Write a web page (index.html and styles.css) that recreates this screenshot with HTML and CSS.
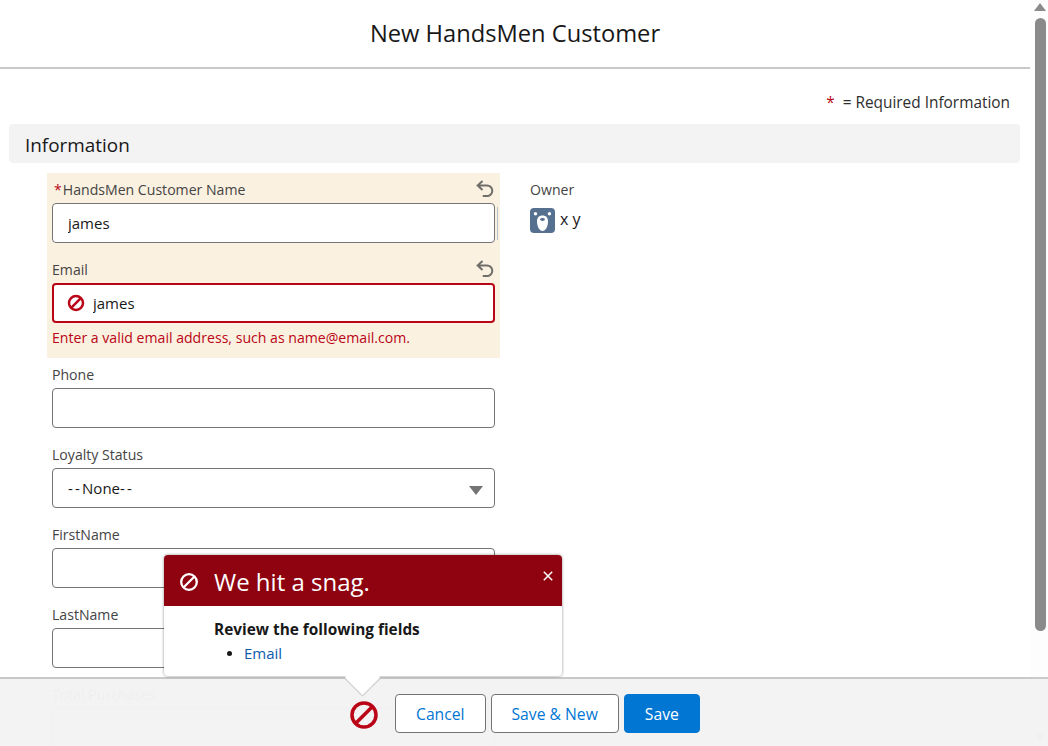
FILE: index.html
```html
<!DOCTYPE html>
<html lang="en">
<head>
<meta charset="utf-8">
<title>New HandsMen Customer</title>
<link rel="stylesheet" href="styles.css">
</head>
<body>
<div class="app">
  <main class="modal">
    <header class="modal-head"><h1>New HandsMen Customer</h1></header>
    <p class="required"><span class="star">*</span> = Required Information</p>
    <h2 class="section">Information</h2>
    <div class="columns">
      <div class="form-col">
        <div class="changed">
          <div class="field">
            <div class="label-row">
              <label><span class="star-label">*</span>HandsMen Customer Name</label>
              <svg class="undo" viewBox="0 0 16 16"><path d="M5.800.8 1.500 4.800l4.300 4M1.800 4.800h8a4.700 4.700 0 0 1 0 9.400H6"/></svg>
            </div>
            <div class="input-wrap with-rule"><input class="input" type="text" value="james"></div>
          </div>
          <div class="field tight">
            <div class="label-row">
              <label>Email</label>
              <svg class="undo" viewBox="0 0 16 16"><path d="M5.800.8 1.500 4.800l4.300 4M1.800 4.800h8a4.700 4.700 0 0 1 0 9.400H6"/></svg>
            </div>
            <div class="input-wrap">
              <input class="input invalid" type="text" value="james">
              <svg class="ban ban-input" viewBox="0 0 18 18"><circle cx="9" cy="9" r="7"/><path d="M13.800 4.200 4.200 13.800"/></svg>
            </div>
            <p class="error">Enter a valid email address, such as name@email.com.</p>
          </div>
        </div>
        <div class="plain">
          <div class="field"><div class="label-row"><label>Phone</label></div><input class="input" type="text"></div>
          <div class="field"><div class="label-row"><label>Loyalty Status</label></div>
            <div class="input-wrap"><div class="input select"><span class="dashes">--</span>None<span class="dashes">--</span></div><span class="caret"></span></div></div>
          <div class="field"><div class="label-row"><label>FirstName</label></div><input class="input" type="text"></div>
          <div class="field"><div class="label-row"><label>LastName</label></div><input class="input" type="text"></div>
          <div class="field"><div class="label-row"><label>Total Purchases</label></div><input class="input" type="text"></div>
        </div>
      </div>
      <div class="owner">
        <div class="owner-label">Owner</div>
        <div class="owner-value">
          <svg class="avatar" viewBox="0 0 25 25">
            <rect width="25" height="25" rx="4" fill="#56708f"/>
            <circle cx="5.500" cy="5.800" r="1.700" fill="#fff"/>
            <circle cx="19.500" cy="5.800" r="1.700" fill="#fff"/>
            <path d="M12.500 7.500c3.500 0 5.500 2 5.500 6 0 5-2.500 9.500-5.500 9.500S7 18.500 7 13.500c0-4 2-6 5.500-6z" fill="#fff"/>
            <ellipse cx="12.500" cy="11.500" rx="2.400" ry="1.400" fill="#56708f"/>
          </svg>
          <span>x y</span>
        </div>
      </div>
    </div>
  </main>
  <aside class="scrollbar">
    <span class="arrow-up"></span>
    <span class="thumb"></span>
    <span class="arrow-down"></span>
  </aside>
  <footer class="footer">
    <svg class="ban ban-footer" viewBox="0 0 28 28"><circle cx="14" cy="14" r="12"/><path d="M22.500 5.500 5.500 22.500"/></svg>
    <button class="btn" type="button">Cancel</button>
    <button class="btn" type="button">Save &amp; New</button>
    <button class="btn primary" type="button">Save</button>
  </footer>
  <section class="popover">
    <div class="pop-head">
      <svg class="ban ban-pop" viewBox="0 0 18 18"><circle cx="9" cy="9" r="7.800"/><path d="M14.500 3.500 3.500 14.500"/></svg>
      <h3>We hit a snag.</h3>
      <svg class="close" viewBox="0 0 10 10"><path d="M.8.8l8.400 8.400M9.200.8.8 9.200"/></svg>
    </div>
    <div class="pop-body">
      <strong>Review the following fields</strong>
      <ul><li><a href="#">Email</a></li></ul>
    </div>
    <span class="nubbin"></span>
  </section>
</div>
</body>
</html>
```
FILE: styles.css
```css
* { box-sizing: border-box; }
html, body { margin: 0; height: 100%; overflow: hidden; background: #fff; }
body { font-family: "Open Sans", "Noto Sans", sans-serif; font-size: 14px; color: #181818; }
.app { position: relative; display: flex; width: 1048px; height: 746px; overflow: hidden; }
.modal { width: 1030px; flex: none; height: 746px; overflow: hidden; background: #fff; }
.modal-head { height: 69px; border-bottom: 2px solid #c9c9c9; display: flex; align-items: center; justify-content: center; padding-bottom: 2px; }
.modal-head h1 { margin: 0; font-size: 23.700px; font-weight: 400; }
.required { margin: 0; height: 55px; padding: 24px 20px 0 0; text-align: right; line-height: 20px; font-size: 15.400px; color: #2e2e2e; }
.star { color: #ba0517; margin-right: 4px; }
.section { margin: 0 10px 10px 9px; height: 39px; padding-left: 16px; background: #f3f3f3; border-radius: 4px; font-size: 18.900px; font-weight: 400; line-height: 42px; }
.columns { display: flex; padding-left: 47px; }
.form-col { width: 453px; flex: none; }
.changed { background: #fbf1e0; padding: 6px 5px 10px; margin-bottom: 6px; }
.plain { padding: 0 5px; }
.field { margin-bottom: 16px; }
.field.tight, .plain .field:last-child { margin-bottom: 0; }
.label-row { height: 20px; margin-bottom: 4px; display: flex; justify-content: space-between; align-items: center; }
label { font-size: 14.100px; line-height: 20px; color: #444; margin-top: 2px; }
.star-label { color: #ba0517; margin: 0 1px 0 2px; }
.undo { width: 18px; height: 18px; margin-right: 1px; fill: none; stroke: #706e6b; stroke-width: 1.800; }
.input-wrap { position: relative; }
.with-rule::after { content: ""; position: absolute; left: 445px; top: 4px; bottom: 3px; width: 1px; background: #b5c3cf; }
.input { display: block; width: 100%; height: 40px; padding: 0 15px; border: 1px solid #747474; border-radius: 4px; background: #fff; font: inherit; font-size: 15px; color: #181818; outline: none; }
.input.invalid { border: 2px solid #ba0517; padding-left: 39px; }
.ban { fill: none; }
.ban-input { position: absolute; left: 15px; top: 11px; width: 18px; height: 18px; stroke: #ba0517; stroke-width: 2.500; }
.error { margin: 5px 0 0; height: 20px; line-height: 20px; font-size: 14.100px; color: #ba0517; }
.select { line-height: 38px; }
.dashes { letter-spacing: 2.200px; }
.caret { position: absolute; right: 12px; top: 18px; border-style: solid; border-width: 9px 7px 0; border-color: #747474 transparent transparent; }
.owner { margin-left: 30px; padding-top: 7px; }
.owner-label { height: 20px; line-height: 20px; color: #444; font-size: 14.100px; }
.owner-value { display: flex; align-items: flex-start; margin-top: 8px; gap: 5px; font-size: 16px; line-height: 22px; }
.avatar { width: 25px; height: 25px; display: block; }
.scrollbar { width: 18px; flex: none; height: 746px; background: #fdfdfd; display: flex; flex-direction: column; align-items: center; padding-top: 3px; }
.arrow-up { border-style: solid; border-width: 0 6px 8px; border-color: transparent transparent #8a8a8a; margin-bottom: 7px; margin-left: 2px; }
.thumb { width: 11px; height: 613px; border-radius: 6px; background: #8a8a8a; margin-left: 2px; }
.arrow-down { border-style: solid; border-width: 8px 6px 0; border-color: #8a8a8a transparent transparent; margin: 102px 0 0 2px; }
.footer { position: absolute; left: 0; right: 0; top: 677px; height: 69px; background: rgba(243, 243, 243, .975); border-top: 2px solid #c9c9c9; display: flex; align-items: flex-start; justify-content: flex-start; padding: 15px 0 0 350px; }
.ban-footer { width: 28px; height: 28px; stroke: #ba0517; stroke-width: 3.500; margin: 7px 17px 0 0; flex: none; }
.btn { height: 39px; padding: 0 20px; margin-right: 5px; border: 1px solid #747474; border-radius: 4px; background: #fff; color: #0176d3; font: inherit; font-size: 15.700px; }
.primary { background: #0176d3; border-color: #0176d3; color: #fff; }
.popover { position: absolute; left: 164px; top: 555px; width: 398px; height: 121px; background: #fff; border-radius: 4px; box-shadow: 0 0 3px rgba(0, 0, 0, .45); }
.pop-head { position: relative; height: 51px; background: #8e030f; border-radius: 4px 4px 0 0; display: flex; align-items: center; padding: 2px 0 0 16px; color: #fff; }
.pop-head h3 { margin: 0 0 0 16px; font-size: 24px; font-weight: 400; }
.ban-pop { width: 18px; height: 18px; stroke: #fff; stroke-width: 2.300; }
.close { position: absolute; right: 9px; top: 16px; width: 10px; height: 10px; stroke: #fff; stroke-width: 1.500; fill: none; }
.pop-body { padding: 14px 50px 0; line-height: 20px; position: relative; z-index: 1; }
.pop-body strong { display: block; font-size: 15.400px; font-weight: 700; }
.pop-body ul { margin: 3px 0 0; padding-left: 30px; }
.pop-body a { color: #0b5cab; text-decoration: none; font-size: 15px; }
.nubbin { position: absolute; left: 186px; top: 110px; width: 25px; height: 25px; transform: rotate(45deg); background: #fff; box-shadow: 1px 1px 1px rgba(0, 0, 0, .18); z-index: 0; }
```
